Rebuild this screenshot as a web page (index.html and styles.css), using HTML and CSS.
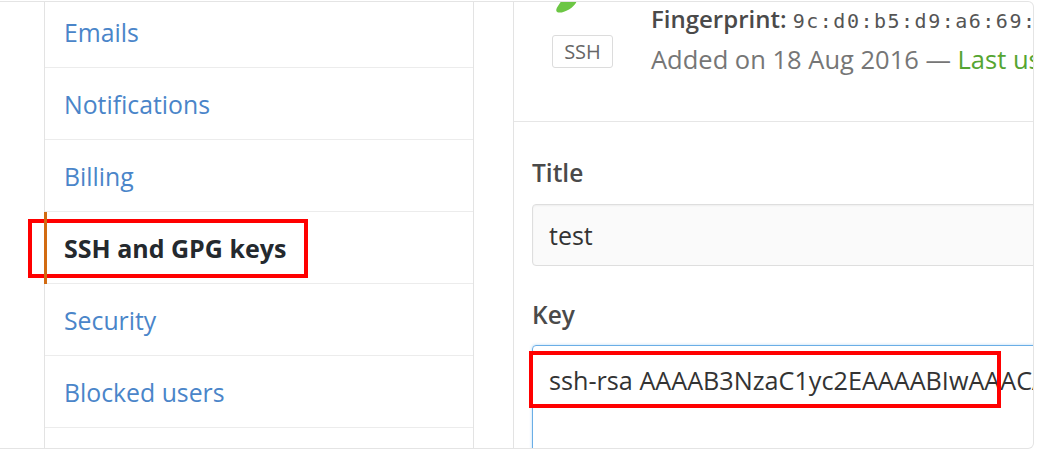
FILE: index.html
```html
<!DOCTYPE html>
<html lang="en">
<head>
<meta charset="utf-8">
<title>SSH and GPG keys</title>
<link rel="stylesheet" href="styles.css">
</head>
<body>
<div class="frame">
  <nav class="menu">
    <a class="menu-item">Emails</a>
    <a class="menu-item">Notifications</a>
    <a class="menu-item">Billing</a>
    <a class="menu-item selected">SSH and GPG keys</a>
    <a class="menu-item">Security</a>
    <a class="menu-item">Blocked users</a>
    <a class="menu-item">Repositories</a>
  </nav>
  <main class="panel">
    <div class="key-item">
      <div class="key-badge-col">
        <svg class="key-icon" width="60" height="15" viewBox="0 0 60 15">
          <path d="M9 2 L24 2 Q23 7 16 11.5 Q8 16 4 14 Q2 12 5 8 Z" fill="#6cc644"/>
        </svg>
        <span class="badge">SSH</span>
      </div>
      <div class="key-info">
        <div class="fp"><strong>Fingerprint:</strong> <code>9c:d0:b5:d9:a6:69:5e:2f</code></div>
        <div class="added">Added on 18 Aug 2016 — <span class="used">Last used within the last week</span></div>
      </div>
    </div>
    <form class="new-key">
      <label class="field-label">Title</label>
      <div class="input">test</div>
      <label class="field-label key-label">Key</label>
      <div class="textarea">ssh-rsa AAAAB3NzaC1yc2EAAAABIwAAACAQEAklOUpkDHrfHY17SbrmTIp</div>
    </form>
  </main>
</div>
<div class="mark mark-nav"></div>
<div class="mark mark-key"></div>
</body>
</html>
```

FILE: styles.css
```css
html, body {
  margin: 0;
  padding: 0;
  background: #ffffff;
}

body {
  font-family: "Open Sans", "Noto Sans", sans-serif;
  color: #333;
}

.frame {
  margin-top: 1px;
  width: 1034px;
  height: 448px;
  box-sizing: border-box;
  border: 1px solid #e4e4e4;
  border-left: none;
  border-radius: 0 6px 6px 0;
  overflow: hidden;
  display: flex;
  align-items: flex-start;
}

.menu {
  margin-left: 44px;
  margin-top: -6px;
  width: 430px;
  flex: none;
  box-sizing: border-box;
  border-left: 1px solid #e3e3e3;
  border-right: 1px solid #e3e3e3;
  display: flex;
  flex-direction: column;
}

.menu-item {
  position: relative;
  flex: none;
  display: flex;
  align-items: center;
  height: 71px;
  border-bottom: 1px solid #ececec;
  padding-left: 19px;
  font-size: 24.8px;
  color: #4a85c9;
}

.menu-item.selected {
  font-weight: 700;
  font-size: 25px;
  color: #24292e;
}

.menu-item.selected::before {
  content: "";
  position: absolute;
  left: -1px;
  top: 0;
  width: 3px;
  height: 72px;
  background: #d26b12;
  z-index: 2;
}

.panel {
  margin-left: 39px;
  flex: none;
  width: 600px;
  border-left: 1px solid #e3e3e3;
  display: flex;
  flex-direction: column;
}

.key-item {
  flex: none;
  margin-top: -20px;
  height: 123px;
  padding-top: 16px;
  border-bottom: 1px solid #e6e6e6;
  display: flex;
}

.key-badge-col {
  width: 137px;
  flex: none;
  display: flex;
  flex-direction: column;
  align-items: center;
}

.key-icon {
  display: block;
}

.badge {
  margin-top: 22px;
  width: 61px;
  height: 33px;
  box-sizing: border-box;
  border: 1px solid #dcdcdc;
  border-radius: 3px;
  display: flex;
  align-items: center;
  justify-content: center;
  font-size: 20px;
  color: #666;
}

.key-info {
  display: flex;
  flex-direction: column;
  white-space: nowrap;
}

.fp, .added {
  height: 41px;
  line-height: 41px;
}

.fp {
  font-size: 24px;
  color: #555;
}

.fp strong {
  font-weight: 600;
  color: #4a4a4a;
}

.fp code {
  font-family: "DejaVu Sans Mono", "Liberation Mono", monospace;
  font-size: 20px;
  color: #555;
  letter-spacing: 1.5px;
}

.added {
  font-size: 25.5px;
  color: #767676;
}

.used {
  color: #55a532;
}

.new-key {
  flex: none;
  padding-left: 18px;
  display: flex;
  flex-direction: column;
  align-items: flex-start;
}

.field-label {
  flex: none;
  margin-top: 36px;
  height: 30px;
  line-height: 30px;
  font-size: 24.5px;
  font-weight: 600;
  color: #4a4a4a;
}

.key-label {
  margin-top: 34px;
}

.input {
  flex: none;
  margin-top: 16px;
  width: 560px;
  height: 62px;
  box-sizing: border-box;
  border: 1px solid #dedede;
  border-radius: 4px;
  background: #fafafa;
  box-shadow: inset 0 1px 2px rgba(0, 0, 0, 0.05);
  padding-left: 16px;
  display: flex;
  align-items: center;
  font-size: 25px;
  color: #333;
  white-space: nowrap;
}

.textarea {
  flex: none;
  margin-top: 15px;
  width: 560px;
  height: 140px;
  box-sizing: border-box;
  border: 1.5px solid #6aaee6;
  border-radius: 4px;
  box-shadow: 0 0 3px rgba(81, 167, 232, 0.45);
  padding: 17px 0 0 16px;
  font-size: 25.2px;
  line-height: 34px;
  color: #333;
  white-space: nowrap;
  overflow: hidden;
}

.mark {
  position: absolute;
  box-sizing: border-box;
  border: 4px solid #ff0000;
  z-index: 1;
}

.mark-nav {
  left: 28px;
  top: 219px;
  width: 280px;
  height: 59px;
}

.mark-key {
  left: 529px;
  top: 351px;
  width: 472px;
  height: 57px;
}
```
